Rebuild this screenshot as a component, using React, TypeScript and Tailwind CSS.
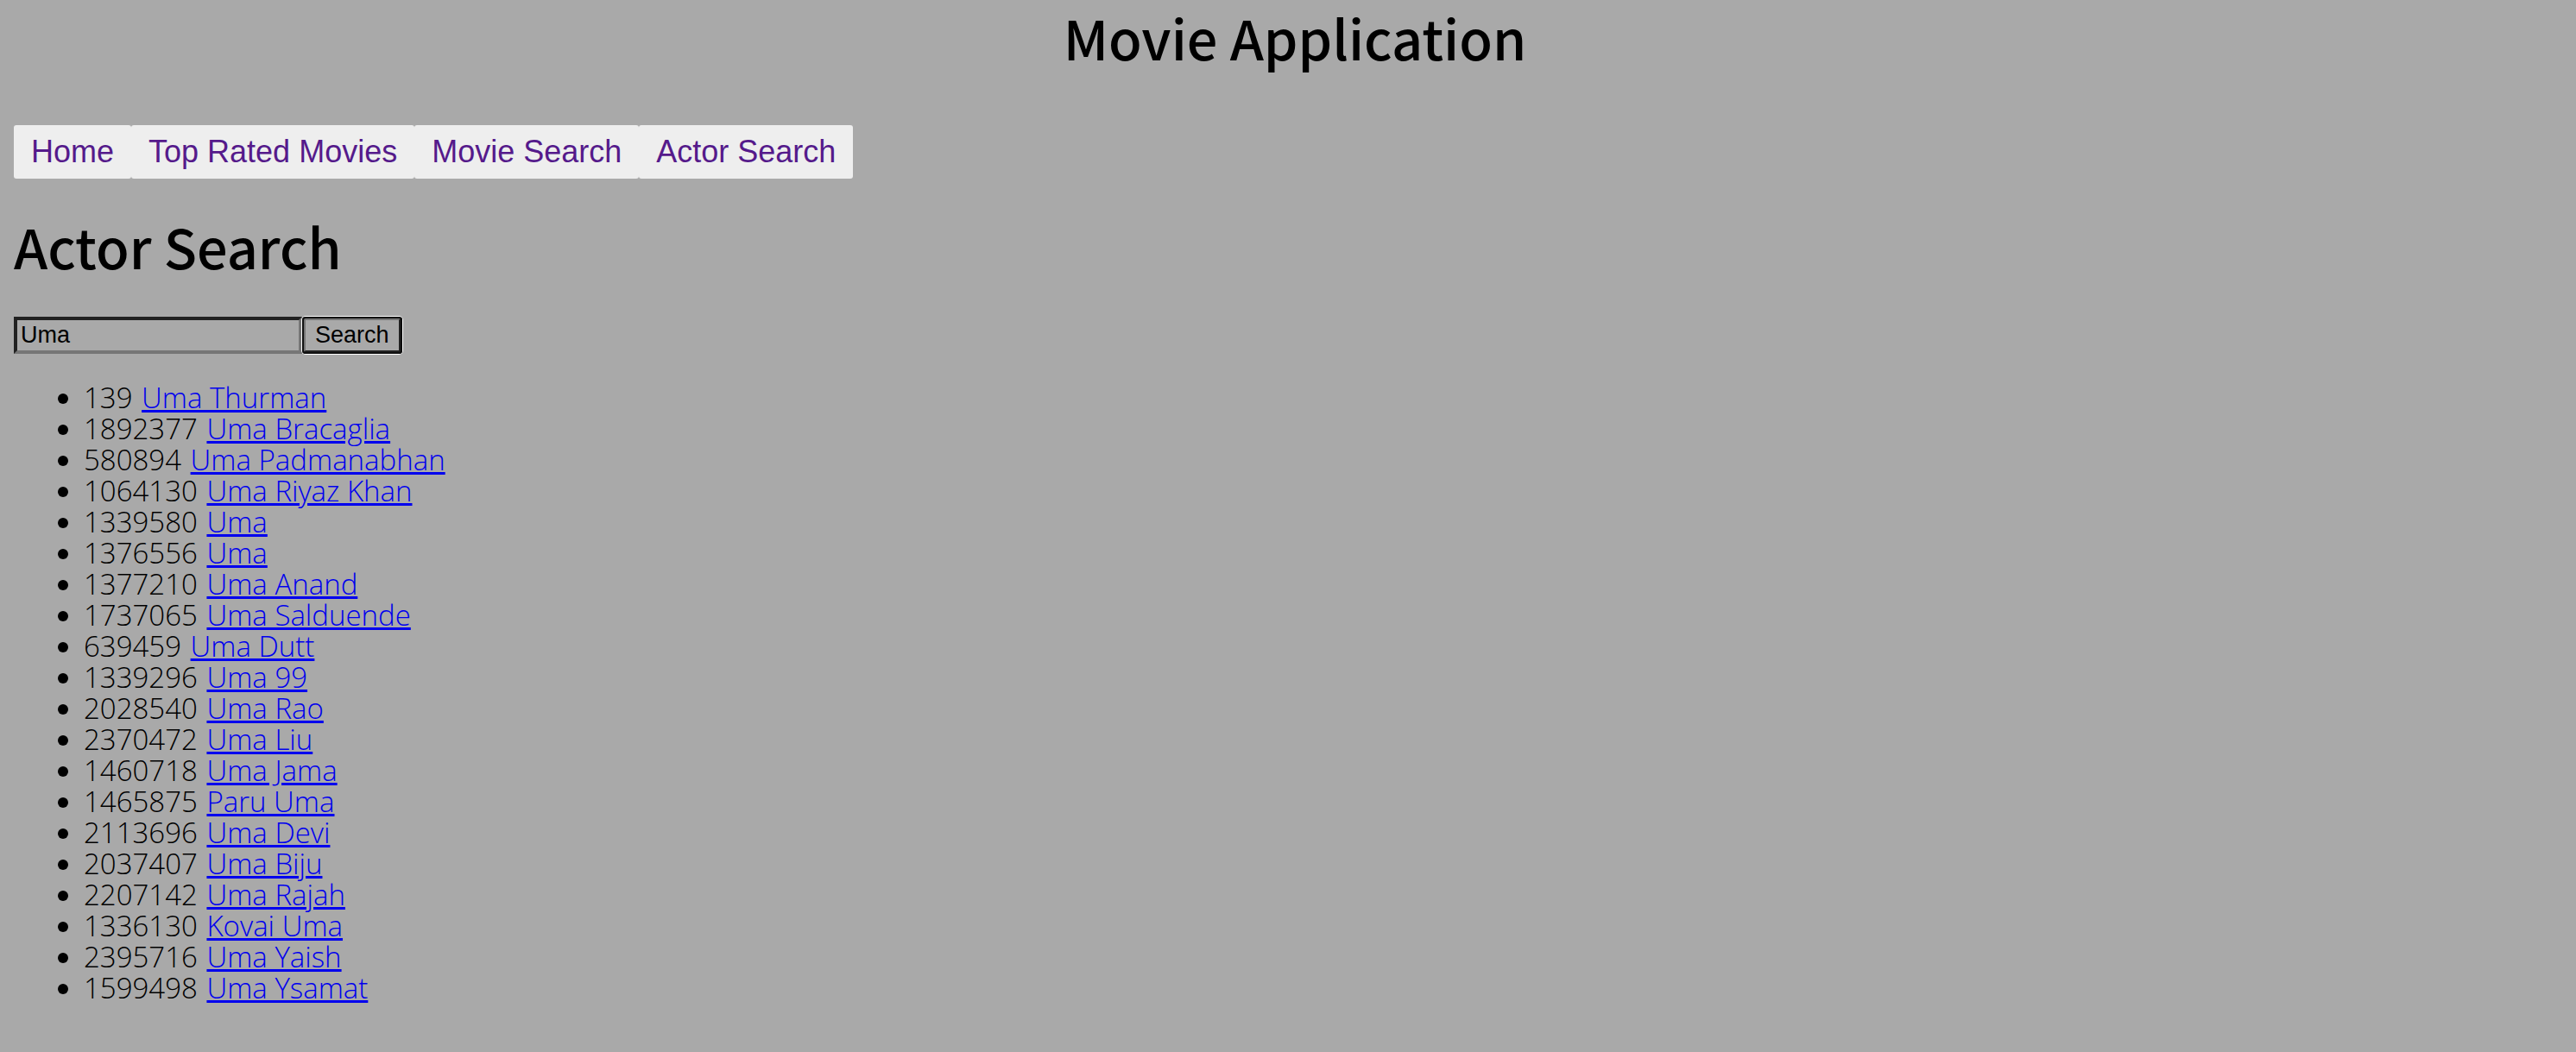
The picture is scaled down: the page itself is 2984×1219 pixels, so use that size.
import { useState } from 'react';

const links = ['Home', 'Top Rated Movies', 'Movie Search', 'Actor Search'];

const actors: [number, string][] = [
  [139, 'Uma Thurman'],
  [1892377, 'Uma Bracaglia'],
  [580894, 'Uma Padmanabhan'],
  [1064130, 'Uma Riyaz Khan'],
  [1339580, 'Uma'],
  [1376556, 'Uma'],
  [1377210, 'Uma Anand'],
  [1737065, 'Uma Salduende'],
  [639459, 'Uma Dutt'],
  [1339296, 'Uma 99'],
  [2028540, 'Uma Rao'],
  [2370472, 'Uma Liu'],
  [1460718, 'Uma Jama'],
  [1465875, 'Paru Uma'],
  [2113696, 'Uma Devi'],
  [2037407, 'Uma Biju'],
  [2207142, 'Uma Rajah'],
  [1336130, 'Kovai Uma'],
  [2395716, 'Uma Yaish'],
  [1599498, 'Uma Ysamat'],
];

export default function App() {
  const [query, setQuery] = useState('Uma');

  return (
    <div className="min-h-screen bg-[#a9a9a9] px-4 font-['Open_Sans',sans-serif] text-black">
      <header>
        <h1 className="pl-4 text-center font-['Noto_Sans_CJK_KR',sans-serif] text-[63px] leading-[86px] font-medium">
          Movie Application
        </h1>
        <nav className="mt-[59px] flex font-['Liberation_Sans',sans-serif] text-4xl">
          {links.map((label) => (
            <a
              key={label}
              href="#"
              className="rounded-[3px] bg-[#eeeeee] px-5 py-[10px] leading-[42px] text-[#551a8b]"
            >
              {label}
            </a>
          ))}
        </nav>
      </header>
      <main>
        <h1 className="mt-[35px] font-['Noto_Sans_CJK_KR',sans-serif] text-[63px] leading-[86px] font-medium">
          Actor Search
        </h1>
        <form
          className="mt-[39px] flex font-['Liberation_Sans',sans-serif] text-[27px] leading-[31px]"
          onSubmit={(e) => e.preventDefault()}
        >
          <input
            aria-label="Actor name"
            value={query}
            onChange={(e) => setQuery(e.target.value)}
            className="h-[43px] w-[334px] border-4 border-t-[#212121] border-r-[#767676] border-b-[#767676] border-l-[#212121] px-1 outline-none"
          />
          <button
            type="submit"
            className="h-[43px] rounded-[4px] border-4 border-t-[#767676] border-r-[#212121] border-b-[#212121] border-l-[#767676] px-[11px] leading-[31px] shadow-[0_0_0_1px_#ffffff] outline-2 -outline-offset-2 outline-[#101010]"
          >
            Search
          </button>
        </form>
        <ul className="mt-[33px] list-disc pl-[81px] text-[33px] leading-9 font-light">
          {actors.map(([id, name]) => (
            <li key={id}>
              {id}{' '}
              <a href="#" className="ml-0.5 text-[#0000ee] underline decoration-[3px]">
                {name}
              </a>
            </li>
          ))}
        </ul>
      </main>
    </div>
  );
}
